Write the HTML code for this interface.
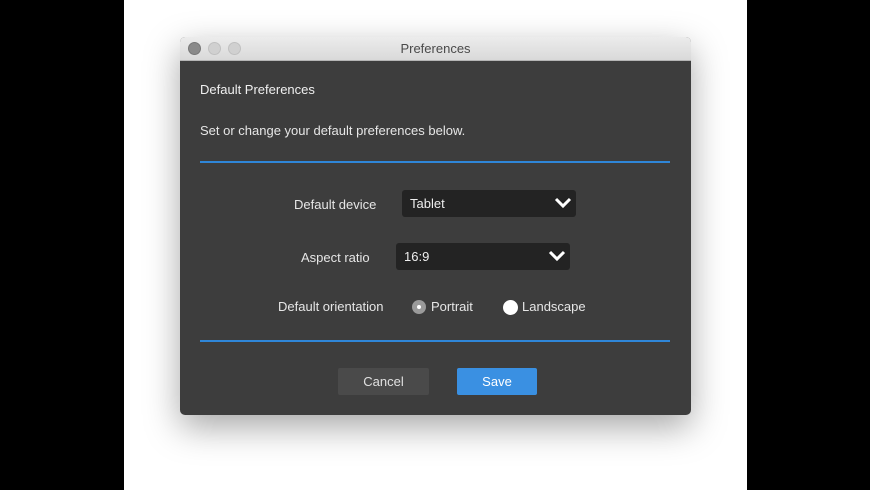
<!DOCTYPE html>
<html><head><style>
body{margin:0;width:870px;height:490px;background:#000;font-family:"Liberation Sans",sans-serif;position:relative;overflow:hidden}
.pg{position:absolute;left:124px;top:0;width:623px;height:490px;background:#fff;overflow:hidden}
.win{position:absolute;left:180px;top:37px;width:511px;height:378px;border-radius:5px;overflow:hidden;box-shadow:0 12px 35px rgba(0,0,0,.35);background:#3d3d3d}
.tb{height:23px;background:linear-gradient(#ececec,#d9d9d9);border-bottom:1px solid #b5b5b5;position:relative}
.tb .t{position:absolute;left:0;right:0;text-align:center;top:4px;font-size:13px;color:#4a4a4a}
.dot{position:absolute;top:5px;width:11px;height:11px;border-radius:50%;background:#d0d0d0;border:1px solid #c0c0c0}
.a{position:absolute;color:#e6e6e6;font-size:13px}
.line{position:absolute;left:20px;width:470px;height:2px;background:#2f86d8}
.sel{position:absolute;height:27px;background:#232323;border-radius:3px;color:#eee;font-size:13px;line-height:27px;padding-left:8px;box-sizing:border-box}
.sel svg{position:absolute;right:4px;top:7px}
.btn{position:absolute;top:331px;height:27px;border-radius:2px;text-align:center;line-height:27px;font-size:13px}
</style></head><body>
<div class="pg"></div>
<div class="win">
<div class="tb"><div class="dot" style="left:8px;background:#8a8a8a;border-color:#777"></div><div class="dot" style="left:28px"></div><div class="dot" style="left:48px"></div><div class="t">Preferences</div></div>
<div class="a" style="left:20px;top:45px;font-size:13px;color:#f0f0f0">Default Preferences</div>
<div class="a" style="left:20px;top:86px">Set or change your default preferences below.</div>
<div class="line" style="top:124px"></div>
<div class="a" style="left:114px;top:160px">Default device</div>
<div class="sel" style="left:222px;top:153px;width:174px">Tablet<svg width="18" height="12"><path d="M2 2l7 7 7-7" stroke="#fff" stroke-width="3" fill="none"/></svg></div>
<div class="a" style="left:121px;top:213px">Aspect ratio</div>
<div class="sel" style="left:216px;top:206px;width:174px">16:9<svg width="18" height="12"><path d="M2 2l7 7 7-7" stroke="#fff" stroke-width="3" fill="none"/></svg></div>
<div class="a" style="left:98px;top:262px">Default orientation</div>
<div style="position:absolute;left:232px;top:263px;width:14px;height:14px;border-radius:50%;background:#9a9a9a"><div style="position:absolute;left:5px;top:5px;width:4px;height:4px;border-radius:50%;background:#fff"></div></div>
<div class="a" style="left:251px;top:262px">Portrait</div>
<div style="position:absolute;left:323px;top:263px;width:15px;height:15px;border-radius:50%;background:#fff"></div>
<div class="a" style="left:342px;top:262px">Landscape</div>
<div class="line" style="top:303px"></div>
<div class="btn" style="left:158px;width:91px;background:#4a4a4a;color:#e0e0e0">Cancel</div>
<div class="btn" style="left:277px;width:80px;background:#3a90e2;color:#fff">Save</div>
</div>
</body></html>
